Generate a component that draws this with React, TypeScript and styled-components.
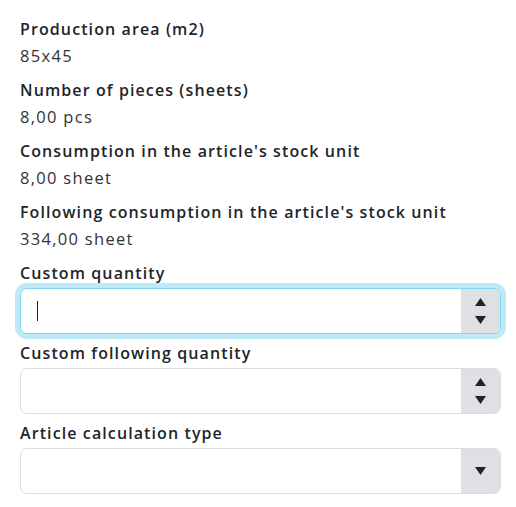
import React from 'react';
import styled, { createGlobalStyle } from 'styled-components';

const GlobalStyle = createGlobalStyle`
  body {
    margin: 0;
    background: #fff;
    font-family: "Open Sans", "Liberation Sans", sans-serif;
    color: #212529;
  }
`;

const Panel = styled.div`
  width: 516px;
  box-sizing: border-box;
  padding: 17px 15px 0 20px;
  display: flex;
  flex-direction: column;
`;

const InfoBlock = styled.div`
  display: flex;
  flex-direction: column;
  gap: 3px;
  margin-bottom: 10px;
`;

const Label = styled.div`
  font-size: 16px;
  line-height: 24px;
  font-weight: 600;
  letter-spacing: 1.1px;
  color: #212529;
  white-space: nowrap;
`;

const Value = styled.div`
  font-size: 16.5px;
  line-height: 24px;
  font-weight: 400;
  letter-spacing: 1.3px;
  color: #333;
`;

const FieldBlock = styled.div`
  display: flex;
  flex-direction: column;
  gap: 3px;
  margin-bottom: 7px;
`;

const Shell = styled.div<{ $focused?: boolean }>`
  height: 46px;
  box-sizing: border-box;
  display: flex;
  border: 1px solid ${({ $focused }) => ($focused ? '#7fd6ee' : '#dcdcdc')};
  border-radius: 7px;
  overflow: hidden;
  background: #fff;
  box-shadow: ${({ $focused }) => ($focused ? '0 0 0 5px #bdeaf6' : 'none')};
`;

const InputArea = styled.div`
  flex: 1;
  display: flex;
  align-items: center;
  padding-left: 16px;
`;

const Caret = styled.span`
  width: 1px;
  height: 20px;
  background: #222;
`;

const TextInput = styled.input`
  flex: 1;
  border: none;
  outline: none;
  background: transparent;
  font: inherit;
  caret-color: transparent;
`;

const Stepper = styled.div`
  width: 39px;
  background: #dee0e3;
  display: flex;
  flex-direction: column;
  align-items: center;
  justify-content: center;
  gap: 10px;
`;

const Tri = ({ up }: { up?: boolean }) => (
  <svg width="11" height="8" viewBox="0 0 11 8">
    <path d={up ? 'M5.5 0 L11 8 L0 8 Z' : 'M0 0 L11 0 L5.5 8 Z'} fill="#222" />
  </svg>
);

const info = [
  ['Production area (m2)', '85x45'],
  ['Number of pieces (sheets)', '8,00 pcs'],
  ["Consumption in the article's stock unit", '8,00 sheet'],
  ["Following consumption in the article's stock unit", '334,00 sheet'],
];

export default function App() {
  return (
    <>
      <GlobalStyle />
      <Panel>
        {info.map(([label, value]) => (
          <InfoBlock key={label}>
            <Label>{label}</Label>
            <Value>{value}</Value>
          </InfoBlock>
        ))}
        <FieldBlock>
          <Label>Custom quantity</Label>
          <Shell $focused>
            <InputArea>
              <Caret />
              <TextInput />
            </InputArea>
            <Stepper>
              <Tri up />
              <Tri />
            </Stepper>
          </Shell>
        </FieldBlock>
        <FieldBlock>
          <Label>Custom following quantity</Label>
          <Shell>
            <InputArea>
              <TextInput />
            </InputArea>
            <Stepper>
              <Tri up />
              <Tri />
            </Stepper>
          </Shell>
        </FieldBlock>
        <FieldBlock>
          <Label>Article calculation type</Label>
          <Shell>
            <InputArea />
            <Stepper>
              <Tri />
            </Stepper>
          </Shell>
        </FieldBlock>
      </Panel>
    </>
  );
}
